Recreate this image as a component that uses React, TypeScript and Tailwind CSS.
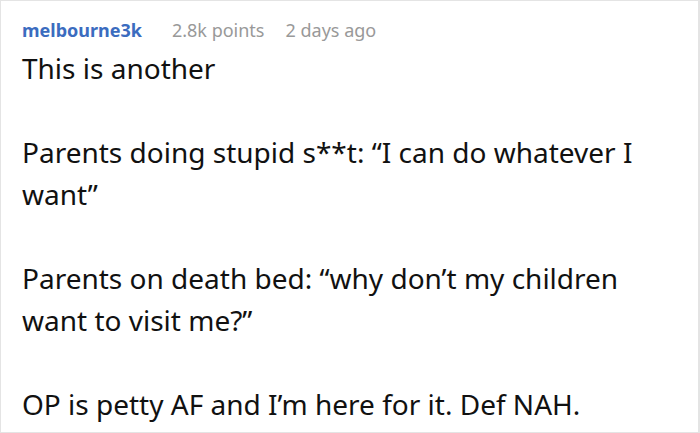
export default function App() {
  const lines = [
    "This is another",
    "",
    "Parents doing stupid s**t: “I can do whatever I want”",
    "",
    "Parents on death bed: “why don’t my children want to visit me?”",
    "",
    "OP is petty AF and I’m here for it. Def NAH.",
  ];
  return (
    <div className="h-[433px] w-[700px] overflow-hidden bg-white font-['Noto_Sans',sans-serif]">
      <div className="h-full border border-r-2 border-[#e4e4e4] px-[21px] pt-[16px]">
        <div className="flex items-baseline text-[18px] leading-[26px]">
          <span className="mr-[30px] font-bold text-[#3b6cbf]">melbourne3k</span>
          <span className="mr-[21px] text-[#999999]">2.8k points</span>
          <span className="text-[#999999]">2 days ago</span>
        </div>
        <div className="mt-[4px] pr-[8px] text-[28px] leading-[42px] text-[#111111]">
          {lines.map((l, i) => (
            <p key={i}>{l || "\u00a0"}</p>
          ))}
        </div>
      </div>
    </div>
  );
}
